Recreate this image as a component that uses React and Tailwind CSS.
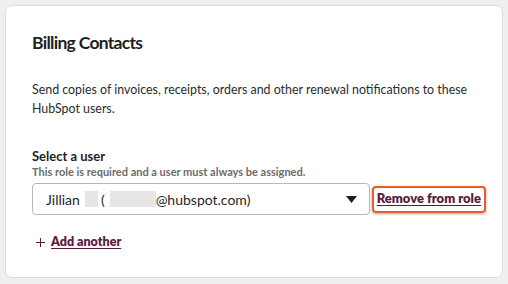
import React from "react";

export default function App() {
  return (
    <div className="w-[508px] h-[284px] bg-[#efefef] p-[5px] font-['Lato',sans-serif]">
      <div className="h-[273px] bg-white border border-[#dcdcdc] rounded-[7px] pl-[26px] pr-[16px] pt-[23px]">
        <h1 className="text-[17.5px] leading-[28px] font-bold tracking-[-0.7px] text-[#1f1f1f]">Billing Contacts</h1>

        <p className="mt-[23px] text-[12.4px] leading-[19px] text-[#2b2b2b] whitespace-nowrap">
          Send copies of invoices, receipts, orders and other renewal notifications to these
          <br />
          HubSpot users.
        </p>

        <div className="mt-[30px]">
          <div className="text-[13px] leading-[16px] font-bold text-[#1f1f1f]">Select a user</div>
          <div className="mt-[1px] text-[11px] leading-[14px] font-bold text-[#6b6b6b]">
            This role is required and a user must always be assigned.
          </div>

          <div className="mt-[4px] flex items-center gap-[2px]">
            <div className="w-[340px] h-[32px] border border-[#b8b8b8] rounded-[4px] flex items-center pl-[13px] pr-[12px]">
              <span className="text-[14px] text-[#1f1f1f] flex items-center">
                Jillian
                <span className="inline-block w-[13px] h-[16px] bg-[#e6e6e6] ml-[5px] mr-[3px]" />
                (
                <span className="inline-block w-[46px] h-[16px] bg-[#e6e6e6] ml-[5px]" />
                @hubspot.com)
              </span>
              <svg className="ml-auto" width="11" height="7" viewBox="0 0 11 7">
                <path d="M0 0 L11 0 L5.5 7 Z" fill="#1f1f1f" />
              </svg>
            </div>
            <div className="h-[27px] border-[2.5px] border-[#f05a2a] rounded-[4px] px-[3px] flex items-center whitespace-nowrap shadow-[0_1px_3px_rgba(0,0,0,0.35)]">
              <a href="#" className="text-[13px] font-extrabold text-[#5c1d3d] underline underline-offset-2">
                Remove from role
              </a>
            </div>
          </div>

          <div className="mt-[18px] flex items-center gap-[6px] pl-[4px]">
            <svg width="9" height="9" viewBox="0 0 9 9">
              <path d="M4.5 0 V9 M0 4.5 H9" stroke="#5c1d3d" strokeWidth="1" />
            </svg>
            <a href="#" className="text-[12.5px] font-extrabold text-[#5c1d3d] underline underline-offset-2">
              Add another
            </a>
          </div>
        </div>
      </div>
    </div>
  );
}
